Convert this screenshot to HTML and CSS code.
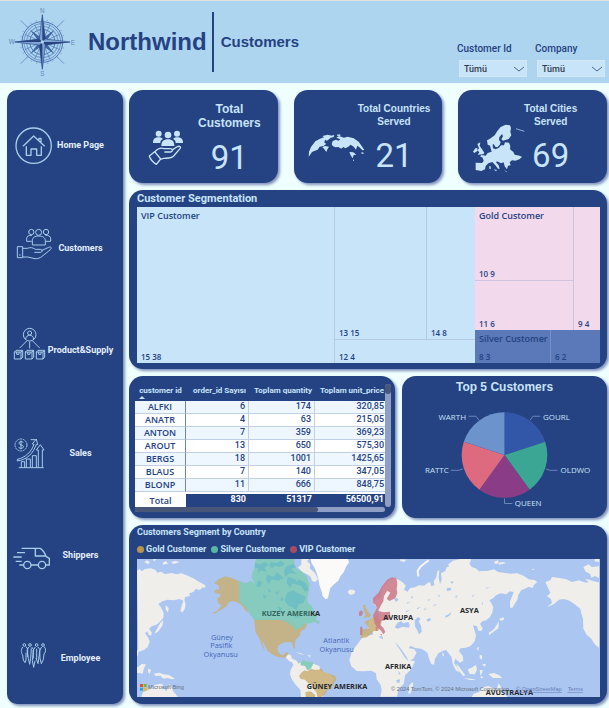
FILE: index.html
```html
<!DOCTYPE html>
<html lang="tr">
<head>
<meta charset="utf-8">
<meta name="viewport" content="width=device-width, initial-scale=1">
<title>Northwind – Customers</title>
<link rel="stylesheet" href="styles.css">
</head>
<body>
<header class="topbar">
  <svg class="compass" viewBox="22 23 204 210" aria-hidden="true">
    <g fill="none" stroke="#4f76b3">
      <circle cx="125" cy="128" r="66" stroke-width="2" stroke-dasharray="3 14"/>
      <circle cx="125" cy="128" r="61" stroke-width="3"/>
      <circle cx="125" cy="128" r="55" stroke-width="2"/>
      <circle cx="125" cy="128" r="47" stroke-width="4" stroke="#7ba3d0"/>
      <circle cx="125" cy="128" r="38" stroke-width="3"/>
      <circle cx="125" cy="128" r="18" stroke-width="2"/>
      <path stroke-width="2" d="M60 63l24 24M190 63l-24 24M60 193l24-24M190 193l-24-24M125 75v106M72 128h106M102 76l46 104M148 76l-46 104M73 105l104 46M73 151l104-46"/>
    </g>
    <path fill="#3f65a5" d="M88 91l34 24-9 9zM162 91l-34 24 9 9zM88 165l34-24-9-9zM162 165l-34-24 9-9z"/>
    <path fill="#7fa5d4" stroke="#2b4b8c" stroke-width="2" d="M125 46l9 73 74 9-74 9-9 73-9-73-74-9 74-9z"/>
    <path fill="#27427f" d="M125 46v82l9-9zM208 128h-83l9 9zM125 210v-82l-9 9zM42 128h83l-9-9z"/>
    <circle cx="125" cy="128" r="5" fill="#aed5ef"/>
    <g class="compass-letters"><text x="125" y="42">N</text><text x="125" y="229">S</text><text x="33" y="135">W</text><text x="217" y="136">E</text></g>
  </svg>
  <h1 class="brand">Northwind</h1>
  <p class="page-name">Customers</p>
  <form class="filters">
    <div class="filter">
      <label for="customer-id">Customer Id</label>
      <div class="select-box"><select id="customer-id"><option>Tümü</option></select>
        <svg viewBox="0 0 10 6" aria-hidden="true"><path d="M0 1l5 4 5-4"/></svg></div>
    </div>
    <div class="filter">
      <label for="company">Company</label>
      <div class="select-box"><select id="company"><option>Tümü</option></select>
        <svg viewBox="0 0 10 6" aria-hidden="true"><path d="M0 1l5 4 5-4"/></svg></div>
    </div>
  </form>
</header>

<div class="layout">
  <nav class="sidebar panel">
    <a href="#home"><svg viewBox="39 120 114 120" aria-hidden="true"><circle cx="101" cy="182" r="53" stroke-width="4"/><path stroke-width="4" d="M69 184l32-31 33 31M117 166v-6h6v13M79 184v27h14v-19h17v19h14v-27"/></svg><span>Home Page</span></a>
    <a href="#customers"><svg viewBox="39 428 114 120" aria-hidden="true"><g stroke-width="3"><circle cx="94" cy="440" r="8"/><circle cx="116" cy="441" r="9"/><circle cx="138" cy="440" r="8"/><path d="M97 479v-13c0-9 7-14 19-14s20 5 20 14v13zM95 468H80v-8c0-7 6-11 16-10M137 468h15v-8c0-7-6-11-16-10M52 484h16v33H52zM68 489h14c10-4 16-2 24 3h15c8 1 8 8 0 9h-18M124 496l22-10c8-3 10 2 5 7l-26 21c-5 4-14 7-20 6l-22-5H68"/><path d="M57 509h5"/></g></svg><span>Customers</span></a>
    <a href="#products"><svg viewBox="39 736 114 120" aria-hidden="true"><g stroke-width="3"><circle cx="89" cy="750" r="19"/><circle cx="89" cy="745" r="6"/><path d="M77 763c1-15 23-15 24 0M80 769l-21 21M89 771v20M98 769l21 21"/><path d="M43 802l5-5h20v20l-5 6H43zM43 802h20v21M63 802l5-5M50 802v7h7v-7M76 802l5-5h20v20l-5 6H76zM76 802h20v21M96 802l5-5M83 802v7h7v-7M109 802l5-5h20v20l-5 6h-20zM109 802h20v21M129 802l5-5M116 802v7h7v-7"/></g></svg><span>Product&amp;Supply</span></a>
    <a href="#sales"><svg viewBox="39 158 114 120" aria-hidden="true"><g stroke-width="3"><circle cx="63" cy="194" r="18" stroke-dasharray="6 2"/><path d="M70 187c-3-5-14-4-13 2s13 3 13 10-12 7-14 1M63 181v26"/><path d="M52 237c24-5 42-22 50-45l-5-1 12-15 4 17-4-1c-10 28-28 46-57 50z M92 178h15"/><path d="M56 262h75M64 262v-18h10v18M79 262v-26h12v26M97 262v-36h12v36M115 262v-53h-6l12-16 11 16h-5v53"/></g></svg><span>Sales</span></a>
    <a href="#shippers"><svg viewBox="39 466 114 120" aria-hidden="true"><g stroke-width="4"><circle cx="82" cy="556" r="11"/><circle cx="126" cy="556" r="11"/><path d="M65 506h56c8 5 13 13 18 25l9 5v20h-11M93 556h22M71 556H58M106 506v23h32M51 519h24M40 532h25M47 545h18"/></g></svg><span>Shippers</span></a>
    <a href="#employee"><svg viewBox="39 774 114 120" aria-hidden="true"><g stroke-width="3"><circle cx="73" cy="795" r="4"/><circle cx="90" cy="795" r="4"/><circle cx="110" cy="795" r="4"/><circle cx="129" cy="795" r="4"/><path d="M68 801c-6 8-4 20 0 24l2 15 5 8 3-8v-22M78 800l5 7v24M86 801l-5 10 4 24 4 18 3-18 2-30M95 801l6 8-4 33 4 20 4-20M106 801l-7 10 1 24M114 801l6 8-6 42-6-17M125 801l-6 10 1 24 4 16 6-13 2-16c6-6 6-15 1-22M110 806v30"/></g></svg><span>Employee</span></a>
  </nav>

  <main class="content">
    <section class="kpis">
      <article class="kpi panel">
        <svg viewBox="21 15 168 279" aria-hidden="true"><g fill="#c7e4f8"><circle cx="98" cy="146" r="9"/><circle cx="153" cy="146" r="9"/><circle cx="126" cy="150" r="10"/><path d="M81 174c0-12 6-17 17-17 6 0 10 2 13 5-7 3-8 7-8 12zM171 174c0-12-6-17-18-17-6 0-9 2-12 5 7 3 8 7 8 12zM106 183c0-14 7-20 20-20s19 6 19 20z"/></g><g fill="none" stroke="#c7e4f8" stroke-width="4" stroke-linejoin="round"><path d="M70 213l16-13 18 22-13 16c-8-5-18-15-21-25zM87 200c9-10 17-13 27-9h20c7 1 7 9 0 10h-19M137 196l15-10c9-5 14-1 10 5l-19 22c-8 8-19 6-30 7l-10 3"/></g></svg>
        <div class="kpi-text kpi-text--large"><h2>Total Customers</h2><p>91</p></div>
      </article>
      <article class="kpi panel">
        <svg viewBox="516 15 168 279" aria-hidden="true"><g fill="#c7e4f8"><path d="M548 215l1-15 6-14 13-17 14-8 12-4-5-4 16-4 13 3-5 8-10 7-6-3-2 9 6 3-8 7-12 2-6 9-8 3-9 4-4 6zM589 186l9-3 11 2-4 6-4 10-6-8zM617 178l3-10 10-4 7 3 6-4-12-5 8-5 15 5 11-3 18 5 15 10 9 13 8 12-6 1-7-8-8-6-4 12-7-9-9-6-7 6-9 5-6-4-6 5-9-5-8 1-8-3zM670 201l12 1 9 7-8 1-3 10-6-9zM615 152l10-2-2 6-8 2zM633 149l9-1 2 4-10 1z"/><path d="M681 224l3 0v3h-3zM705 203l4-1 6 3-7 2z"/></g></svg>
        <div class="kpi-text"><h2>Total Countries Served</h2><p>21</p></div>
      </article>
      <article class="kpi kpi--cities panel">
        <svg viewBox="276 15 168 279" aria-hidden="true"><path fill="#c7e4f8" d="M353 179l-2-13 9-5 14-10 8-13 10-12 15-7 13 2 3 8-2 12 3 10-8 11-17 5-5-4 5-9-3-7-8 10-1 8 5 6-3 9-7 7-6-2-5-8-8 6zM360 182l8-2 1 10 8 3 10-5 6-7 9 0 3-9 12 1 4 10-1 10 10 8 4 8 15 3 7 4-8 7-12 4-10-1-7 6 3 9-8 1-3 11-7-9-3-12-8 3-12-6-3 3 8 9 3 11-5-1-8-10-9-10-12 4-8 8-2 10-11 5-17-3v-22l19 1 5-6-3-10-8-4 5-4 12 2 6-8 12-4zM322 177l9-5-2 10 7 11 7 10-3 5-17 1 5-7-6-6 5-6zM316 190l6-1v9l-9 6-4-4zM358 243l4 1v9l-4-2zM371 253l10 2-3 4zM402 257l8 1v2z"/><path fill="none" stroke="#8fb1d8" stroke-width="3" d="M438 131l12 4 13 4"/></svg>
        <div class="kpi-text"><h2>Total Cities Served</h2><p>69</p></div>
      </article>
    </section>

    <section class="panel segmentation">
      <h2>Customer Segmentation</h2>
      <div class="treemap">
        <div class="vip">
          <div class="cell tall"><b>VIP Customer</b><span>15 38</span></div>
          <div class="cell"><span>13 15</span></div>
          <div class="cell"><span>14 8</span></div>
          <div class="cell wide"><span>12 4</span></div>
        </div>
        <div class="gold">
          <div class="cell"><b>Gold Customer</b><span>10 9</span></div>
          <div class="cell tall"><span>9 4</span></div>
          <div class="cell"><span>11 6</span></div>
        </div>
        <div class="silver">
          <div class="cell"><b>Silver Customer</b><span>8 3</span></div>
          <div class="cell"><span>6 2</span></div>
        </div>
      </div>
    </section>

    <div class="details">
      <section class="panel orders">
        <div class="orders-view">
          <table>
            <colgroup><col class="c-id"><col class="c-count"><col class="c-qty"><col class="c-price"></colgroup>
            <thead><tr><th class="sorted">customer id</th><th>order_id Sayısı</th><th>Toplam quantity</th><th>Toplam unit_price</th></tr></thead>
            <tbody>
              <tr><th>ALFKI</th><td>6</td><td>174</td><td>320,85</td></tr>
              <tr><th>ANATR</th><td>4</td><td>63</td><td>215,05</td></tr>
              <tr><th>ANTON</th><td>7</td><td>359</td><td>369,23</td></tr>
              <tr><th>AROUT</th><td>13</td><td>650</td><td>575,30</td></tr>
              <tr><th>BERGS</th><td>18</td><td>1001</td><td>1425,65</td></tr>
              <tr><th>BLAUS</th><td>7</td><td>140</td><td>347,05</td></tr>
              <tr><th>BLONP</th><td>11</td><td>666</td><td>848,75</td></tr>
            </tbody>
            <tfoot><tr><th>Total</th><td>830</td><td>51317</td><td>56500,91</td></tr></tfoot>
          </table>
          <div class="track track--v"><i></i></div>
          <div class="track track--h"><i></i></div>
        </div>
      </section>

      <section class="panel top-five">
        <h2>Top 5 Customers</h2>
        <svg viewBox="21 87 618 357" role="img" aria-label="Top 5 Customers">
          <path fill="#3257a8" d="M330 256V127A129 129 0 0 1 452.700 216.100z"/>
          <path fill="#3aa693" d="M330 256L452.700 216.100A129 129 0 0 1 405.800 360.400z"/>
          <path fill="#8a3d86" d="M330 256L405.800 360.400A129 129 0 0 1 254.200 360.400z"/>
          <path fill="#de6a80" d="M330 256L254.200 360.400A129 129 0 0 1 207.300 216.100z"/>
          <path fill="#6c93cb" d="M330 256L207.300 216.100A129 129 0 0 1 330 127z"/>
          <path class="leaders" d="M407 151l9-12h22M222 139h22l9 12M456 298l10 4h24M168 302h24l12-4M330 387v15h24"/>
          <g class="pie-labels"><text x="446" y="150">GOURL</text><text x="214" y="150" text-anchor="end">WARTH</text><text x="499" y="311">OLDWO</text><text x="162" y="311" text-anchor="end">RATTC</text><text x="361" y="411">QUEEN</text></g>
        </svg>
      </section>
    </div>

    <section class="panel countries">
      <h2>Customers Segment by Country</h2>
      <ul class="legend"><li class="l-gold">Gold Customer</li><li class="l-silver">Silver Customer</li><li class="l-vip">VIP Customer</li></ul>
      <svg class="map" viewBox="36 117 1389 414">
        <rect x="36" y="117" width="1389" height="414" fill="#abc6f0"/>
        <g fill="#efeeea">
          <path d="M36 152l8-6 6 8 10-7 18-2 14 5 4 8 13-3 10 7 22-3 12 4 16-3 14 5 22 10 18 11 16 8 3 8-12 1-4 7-14-3-7 9-12 4 2 8-14 3-3 8 4 14-3 14-7 11-6-5 4-16 5-15-12-5-16 4-20-2-15 5-12 8 8 10 8 16-1 15-10 12-11 9-14 5-8 8 8 10-1 10-8-3-4-10-7 6 10 13 4 12-6 16-10 8-18 7z"/>
          <path d="M122 255l9 9-2 14-7-10zM105 310l10-10-3 17-13 18-11 6 5-9zM36 392l5-4-2 18-3 4zM40 440l10-8 13 1-6 12-4 16-17-3v-16zM70 445l8 5-4 12-5-5zM86 461l16-3 14 5 16 2 18 11-10 2-12-4-12 2-10-9-14 1zM49 531l5-14 20-9 15-13 17-4 8 3-2 9 13 10 7-22 7 11 6 12 14 17z"/>
          <path d="M58 126l8-5 9 5-6 7zM113 128l10-5 6 8-14 3zM138 126l14-3 12 4-19 5zM83 118l12 0-8 6z"/>
          <path d="M488 403l10 3 3 10 12 5 8 10 10-7 3 8 15-2 16 1 18 7 3 15 30 11 11 12-10 20-18 17-6 18h-65l-2-22-16-17-10-15-5-14 2-14 8-14-4-8-10-5-9-10zM512 396l14 3 14 6-12-2zM546 405l13 2-6 4z"/>
          <path fill="#fbfaf8" d="M557 117h112l3 10-8 12-8 18-10 12-6 13-12 10-12 12-4 16-3 15-8 3-8-10-4-16-6-18-4-22-4-13-6-15-9-14z"/>
          <path d="M667 216l7-7 10 0 7 5-3 7-12 4zM529 117h24l-7 6 10 10-2 12 16 14 9 18-9 10-9-5-4-12-12-8-14-6-12-14 10-8z"/>
        </g>
        <g transform="translate(720 0)" fill="#efeeea">
          <path d="M75 179l18-4 20 12 9 10-5 12 10 6 9-11 14-2 12-6 16 1 10-9 8-1 2 11 10-2-2-12 8-12 3-18 6-4-2 22 4 21 5-14-2-19 13-7 4-11 18-8 20-7 15-4 14 6 8 12 12 4 10 9 13-1 12 0 20-5 12 8 16 2 22 3 20-1 20 8 14 10 18 2 8 7-10 7-4 10-12-4-12 7-10 3-9 14-3 15-11 18-5 8-6-3v-18l6-14 5-14-12-2-10 9-17-3-14 6-8 8-12 7 7 10 5 11-3 16-7 13-11 10-12 3-7 8 8 13-4 8-9-1-4-13-12-3 4 13 5 17-4 18-12 14-15 5-16 2-4 9 11 13 2 15-10 6-14-12-4 13 10 14 5 15-10-8-8-16-5-24-8-10-8-10-9 2-14 8-10 16-3 18-8-2-7-16-4-16-8-8-11-6-19-2-13-7-6 8 16 2 8 11-10 18-20 9-16 5-9-10-11-20-9-19 3-13-18 0-10-8-3-11-13-1-5 8-8-9-4-13-13-10 3-22 11-9 15 0 4-10-6-8 0-14-10-10 6-10 15-9 4-26z"/>
          <path d="M-5 348l20-3 24-3 6 12 18 7 14-4 24 4 10 18 12 24 13 18 14 3-10 22-20 20-4 26-16 16-2 12-2 10H46l4-20-3-15-12-17-2-18-14-8-22 2-22-1-16-14-6-18 8-28 14-17zM132 498l10-12 3 7-8 26-7 4z"/>
          <path d="M232 395l6 11-5 4zM273 431l8 8 20 27-6 3-15-18zM296 474l28 3 10 3-20 0zM308 448l12-5 13-9 3 14-6 15-16-1zM344 450l10 1-7 16 9 6-8 2zM370 462l17-3 16 7 9 9-12-1-16 0zM320 531l6-10 16-5 12-14 16-4 8 4 16 8 7-20 8 12 6 15 13 14zM403 296l13-4 1 7-11 3zM402 304l-2 21-14 10-13 10-2-6 16-12zM335 384l7-3-3 13zM344 404l8 3-2 13-6-7zM351 431l12 2-4 8z"/>
          <path d="M541 186l15-5 5-10 23 3 20 4 17 8 20-5 22 7 18-5 21 4v196l-13-10-10-17-14-12-10-18-1-30-5-15-3-15-18-14-15-10-17-5-14 2-16 14-20 9 15-14-4-12-11-7 10-10z"/>
          <path d="M655 141l16-8 9 8 22-2v35l-12-6-11 5-4-12-13-6zM660 176l18 5 24 12v10l-23-9zM690 117h12v9l-14-2zM387 125l12-4 2 9-10 2zM400 128l16-2 6 4-19 4zM498 148l9-2 1 4zM104 118l20 1-6 7-12-3zM248 134l16-12 22-5h32l-3 12-22 16-22 4z"/>
          <path fill="none" stroke="#f7f6f3" stroke-width="6" d="M160 169l-2-16 9-14 13-10 11-8"/>
        </g>
        <g transform="translate(720 0)" fill="#abc6f0">
          <path d="M89 322l8-13 11-6 7 7 15-4 4 9-2 8-19-3-15 6zM149 300l10-9 8 5-6 8 7 13 2 19-8 7-6-14-6-10zM185 298l10-4 3 7-10 4zM240 288l12-6 8-8-5 12-12 7zM245 205l12-2 2 7-13 4zM255 185l10-1-3 8zM88 238l8-5 5 7-9 5zM94 480l12-2-3 10-7 0zM100 452l7 10-5 2zM88 365l14 14 20 28 9 17-11-11-18-28z"/>
          <path d="M137 232l7-4-3 8zM155 265l14-5-12 8zM188 240l6-4-2 7zM205 255l13-3-11 6zM122 273l13-3-11 7zM218 227l9-3-6 7zM288 278l6-9-2 9zM320 228l10-5-8 8zM349 253l5-8-1 9zM270 230l9-6-5 9zM125 248l12-2-10 5zM176 268l9-5-5 8zM362 203l13-2-12 5z"/>
        </g>
        <g fill="#c9ad72" fill-opacity=".82">
          <path d="M268 190l12-12 21-9 21 6 20 9v59l13 6 8 12 7 18-10-8-8-14-15-10-15-4-13 5-4 10-14 10-24 13-6-1 16-8 13-15-10-8-4-13 10-7-1-7-14-3-3-7 15-6-3-10z"/>
          <path d="M388 298h91l20 7 11 5 4 14 15-7 13-8 5 3-7 15-12 6-4 14-13 14-2 12 2 15-6-5-5-16-16-1-13 4-12 7-1 14 6 11 10 5 8-10 9 0-5 11-8 5-13-2-17-4-20-14-10-20-7-9 5 17 4 11-8-11-5-17-6-13-10-16z"/>
          <path d="M529 458l10-7 8 3 11-8 10 3 13 0 8-4 6 10 20 7 16 6 3 12-9 11-4 14-14 6-8 14-10 6h-12l-3-15-8-8-1-12-16-7-9-10-13-2-5-8zM541 516l16-2 14 11-1 6h-28z"/>
          <path d="M713 255l8-1 1 10 8 12 8 10-5 6-17 2 6-9-5-11zM731 299l14-7 11-3 9 10 5 6-4 16-7 12-13 0-9 10-11 9-18 3-2-27 25-1-3-10-10-11z"/>
        </g>
        <path fill="#82cbb7" fill-opacity=".9" d="M342 184l22 5 14-7 10 8-9-22 9-24 2-16 3-11h116l-1 21 9 10 15 7 13 14 9 25-3 20-5 22 3 12 11 10 9 18 8 10-4 13 14 7-8 6-10-7-16 6-10-2-10 11-11 3-10 9-8-12-19-14-18-6h-79l-12-15-13-22-21-20z"/>
        <g fill="#6abbc5" fill-opacity=".8"><path d="M391 128l13 6 16-9 10 9-12 9 8 12-18-4-11 10 4-16-12-2zM438 126l18 3 12-7 12 11-17 8-14-4-7 8-9-8zM484 139l22-7 7 9-15 7 18 14-21-3-14 12-4-16zM426 164l21 6 8-13 22 17-17 8-20-4-8 14-9-12zM400 181l11 5-5 16-13-3zM488 170l23 8 12 18-20-6-7 14-11-15zM487 218l17-7 18 10 20 9-7 19-14 4-6 19-12-10-14-6-11-16zM427 204l13 10-8 3zM449 218l12-5-3 13zM413 222l13 8-9 5zM468 229l8 12-9 2zM458 260l12 3-4 16zM500 281l13 3 15 10-16-2zM519 178l23 10 9 21-10 7-11-16-13-10z"/></g>
        <path fill="#88cdbb" d="M527 425l9-5 12 5 17 1-2 10-6 10-10 5-7-13-13-2z"/>
        <g fill="#cb7788" fill-opacity=".85"><path d="M702 276l7-6 5 8-4 9-8 1zM706 320h6v25l-7-1zM745 250l-1-16 16-15 11-20 15-20 14-7 14 2 3 17-2 16 2 12-6 16-18 8-8-7 11-18-9-6-10 16-2 16-7 12-5 10-8-4-3-7zM755 264l7-3-1 12 15 4 19-2v23l-16 3-10 2-5 10 12 12 5 11-6 7-7-11-11-10-8-11-3-16-2-9 6-10zM752 321l5-2v14l-5-2zM765 342l6 0v5z"/></g>
        <g class="map-land"><text class="under-fill" x="410" y="288">KUZEY AMERI<tspan>KA</tspan></text><text x="545" y="508">GÜNEY AMERIKA</text><text x="775" y="299">AVRUPA</text><text x="1005" y="279">ASYA</text><text x="780" y="446">AFRIKA</text><text x="1082" y="524">AVUSTRALYA</text></g>
        <g class="map-sea"><text x="291" y="359">Güney</text><text x="289" y="385">Pasifik</text><text x="287" y="410">Okyanusu</text><text x="634" y="368">Atlantik</text><text x="635" y="395">Okyanusu</text></g>
        <path fill="#e8502d" d="M45 492h9v9h-9z"/><path fill="#7bb72e" d="M56 492h9v9h-9z"/><path fill="#2fa0e5" d="M45 503h9v9h-9z"/><path fill="#f5b51d" d="M56 503h9v9h-9z"/>
        <g class="map-credit"><text x="69" y="508">Microsoft Bing</text><text x="798" y="513">© 2024 TomTom, © 2024 Microsoft Corporation,</text><a href="#osm"><text x="1173" y="513">© OpenStreetMap</text></a><a href="#terms"><text x="1328" y="513">Terms</text></a></g>
      </svg>
    </section>
  </main>
</div>
</body>
</html>
```
FILE: styles.css
```css
:root {
  --navy: #254283;
  --sky: #aed5ef;
  --ice: #c7e4f8;
  --din: Roboto, "Liberation Sans", sans-serif;
  --arial: "Liberation Sans", Arial, sans-serif;
  --segoe: "Open Sans", "Noto Sans", sans-serif;
}

* { box-sizing: border-box; }

body {
  margin: 0;
  background: #efffff;
  color: var(--navy);
  font-family: var(--din);
}

h1, h2, p, ul { margin: 0; padding: 0; }

/* Header */
.topbar {
  display: flex;
  align-items: center;
  height: 83px;
  padding: 0 4px 0 8px;
  background: var(--sky);
  border-top: 1px solid #dfe2df;
}
.compass { width: 68px; height: 70px; margin-right: 12px; }
.compass-letters { font: 19px var(--arial); fill: #6288bd; text-anchor: middle; }
.brand { font: bold 24px/60px var(--arial); padding-right: 5px; border-right: 2px solid var(--navy); }
.page-name { font: bold 15px/60px var(--arial); padding-left: 7px; }
.filters { display: flex; gap: 10px; margin-left: auto; align-self: flex-end; padding-bottom: 6px; }
.filter label { display: block; width: 68px; margin-left: -2px; font: 500 10px/12px var(--din); }
.select-box { position: relative; width: 68px; margin-top: 5px; }
.select-box select {
  display: block;
  width: 100%;
  height: 17px;
  padding: 0 4px;
  appearance: none;
  border: 1px solid #d3e6f2;
  border-radius: 0;
  background: var(--ice);
  color: #333c50;
  font: 500 9px/14px var(--din);
}
.select-box svg { position: absolute; right: 3px; top: 6px; width: 10px; height: 6px; fill: none; stroke: #51658f; pointer-events: none; }

/* Page frame */
.layout { display: grid; grid-template-columns: 116px minmax(0, 1fr); gap: 6px; padding: 7px 2px 4px 7px; }
.panel { background: var(--navy); border-radius: 14px; box-shadow: 2px 2px 3px #7f91bb; }
.panel h2 { color: var(--ice); }
.content { display: grid; gap: 7px; align-content: start; }

.sidebar { display: flex; flex-direction: column; justify-content: space-between; padding: 35px 13px 26px 6px; border-radius: 10px; }
.sidebar a { display: grid; grid-template-columns: 38px minmax(0, 1fr); align-items: center; color: #e3effb; text-decoration: none; font: bold 9px/12px var(--din); }
.sidebar svg { width: 38px; height: 40px; overflow: visible; fill: none; stroke: #a5cee9; stroke-linejoin: round; }
.sidebar span { justify-self: center; white-space: nowrap; }

/* KPI cards */
.kpis { display: grid; grid-template-columns: repeat(3, 1fr); gap: 16px; }
.kpi { display: flex; padding: 0 8px 0 4px; color: var(--ice); }
.kpi--cities { padding-right: 24px; }
.kpi svg { flex: none; width: 56px; height: 93px; overflow: visible; }
.kpi-text { flex: 1; padding-top: 12px; text-align: center; }
.kpi-text h2 { font: bold 10px/13px var(--arial); }
.kpi-text--large h2 { font: bold 12px/14px var(--arial); }
.kpi-text p { margin-top: 12px; font: 400 33px/32px var(--din); }

/* Treemap */
.segmentation { padding: 0 7px 6px 8px; }
.segmentation h2 { font: bold 11px/17px var(--din); }
.treemap { display: grid; grid-template: 123fr 33fr / 338fr 125fr; height: 156px; font-family: var(--segoe); }
.vip, .gold, .silver { display: grid; }
.vip { grid-row: 1 / 3; grid-template: 133fr 23fr / 198fr 92fr 48fr; background: var(--ice); }
.gold { grid-template: 74fr 49fr / 98fr 27fr; background: #f2d9ec; }
.silver { grid-template-columns: 75fr 50fr; background: #5b78b8; }
.cell { display: flex; flex-direction: column; justify-content: space-between; min-width: 0; padding: 2px 0 0 4px; border: 0 solid #b5c9e3; white-space: nowrap; }
.cell b { font-weight: 600; font-size: 9px; line-height: 14px; }
.cell span { margin-top: auto; font-weight: 600; font-size: 8px; line-height: 12px; }
.cell.tall { grid-row: 1 / 3; }
.cell.wide { grid-column: 2 / 4; }
.vip .tall, .vip .cell:nth-child(2) { border-right-width: 1px; }
.vip .cell:nth-child(2), .vip .cell:nth-child(3) { border-bottom-width: 1px; }
.gold .cell { border-color: #cfc3de; }
.gold .tall { grid-column: 2; border-left-width: 1px; }
.gold .cell:first-child { border-bottom-width: 1px; }
.silver .cell:last-child { border-left: 1px solid #7590c9; }

/* Orders table and pie */
.details { display: grid; grid-template-columns: 266fr 205fr; gap: 7px; }
.orders { padding: 4px 4px 6px 6px; }
.orders-view { display: grid; grid-template-columns: minmax(0, 1fr) 6px; }
.orders table { width: 100%; table-layout: fixed; border-collapse: separate; border-spacing: 0; font-family: var(--din); }
.c-id { width: 51px; }
.c-count { width: 63px; }
.c-qty { width: 66px; }
.orders th, .orders td { padding: 0 3px 0 0; overflow: hidden; white-space: nowrap; }
.orders tr > :last-child { padding-right: 1px; }
.orders thead th { height: 21px; color: var(--ice); font-size: 8px; line-height: 10px; text-align: right; }
.orders thead .sorted { position: relative; padding: 0; text-align: center; }
.sorted::after { content: ""; position: absolute; left: 4px; bottom: 2px; border: 3px solid transparent; border-top: 0; border-bottom-color: var(--ice); }
.orders tbody th, .orders tbody td { height: 13px; border-right: 1px solid #c3cfe2; border-bottom: 1px solid #c3cfe2; }
.orders tbody tr { background: #fff; }
.orders tbody tr:nth-child(odd) { background: #eef7ff; }
.orders tbody th { padding: 0; border-right-color: #6b86bd; font: 600 9px/12px var(--segoe); text-align: center; }
.orders td { text-align: right; vertical-align: top; font-weight: 500; font-size: 9px; line-height: 10px; }
.orders tbody td:last-child { border-right: 0; }
.orders tfoot th, .orders tfoot td { height: 15px; border-top: 2px solid #fff; }
.orders tfoot th { padding: 0; background: #fff; font: 600 9px/13px var(--segoe); }
.orders tfoot td { color: #fff; font-weight: bold; }
.track { display: block; border-radius: 3px; background: #8e9ec4; }
.track i { display: block; border-radius: 3px; background: #48567a; }
.track--v { margin-top: 4px; }
.track--v i { height: 10px; }
.track--h { height: 5px; }
.track--h i { width: 73%; height: 5px; }

.top-five h2 { font: bold 12px/23px var(--arial); text-align: center; }
.top-five svg { display: block; width: 100%; }
.leaders { fill: none; stroke: #6d86b5; stroke-width: 3; }
.pie-labels { font: 24px var(--segoe); fill: var(--ice); }

/* Map */
.countries { padding: 0 7px 7px 8px; }
.countries h2 { font: bold 9px/14px var(--din); }
.legend { display: flex; gap: 5px; list-style: none; color: var(--ice); font: bold 9px/20px var(--din); }
.legend li { display: flex; align-items: center; gap: 2px; }
.legend li::before { content: ""; width: 7px; height: 7px; border-radius: 50%; background: currentColor; }
.l-gold::before { color: #b8954b; }
.l-silver::before { color: #56b8a0; }
.l-vip::before { color: #a64b60; }
.map { display: block; width: 100%; }
.map-land { font: bold 22px var(--segoe); fill: #262a2c; }
.under-fill { fill: #35675e; }
.under-fill tspan { fill: #262a2c; }
.map-sea { font: 22px var(--segoe); fill: #4668b8; text-anchor: middle; }
.map-credit { font: 17px var(--arial); fill: #66717f; }
.map-credit a { fill: #687fb8; text-decoration: underline; }
```
